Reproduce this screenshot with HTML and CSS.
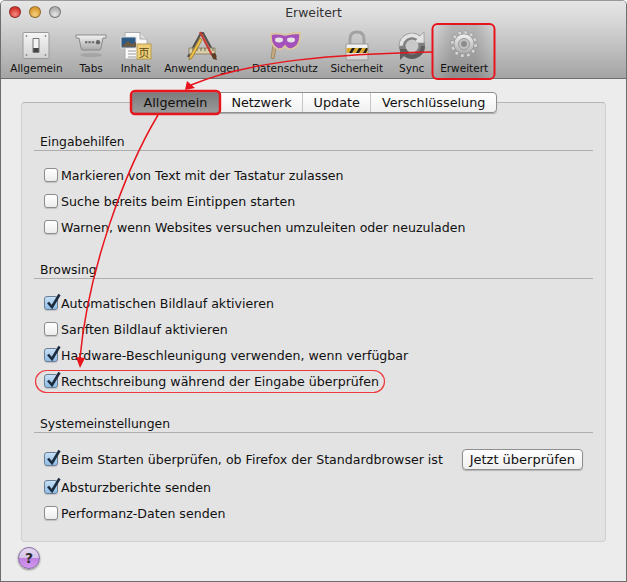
FILE: index.html
```html
<!DOCTYPE html>
<html lang="de">
<head>
  <meta charset="UTF-8">
  <title>Erweitert</title>
  <link rel="stylesheet" href="styles.css">
</head>
<body>
  <svg class="defs" width="0" height="0">
    <defs>
      <symbol id="tick" viewBox="0 0 18 18">
        <path d="M4 9.5 L8 14 L15.5 1.5" fill="none" stroke="#1c2b3d" stroke-width="2.6"/>
      </symbol>
      <linearGradient id="metal" x1="0" y1="0" x2="0" y2="1">
        <stop offset="0" stop-color="#f4f4f4"/>
        <stop offset="1" stop-color="#a9a9a9"/>
      </linearGradient>
      <linearGradient id="plate" x1="0" y1="0" x2="0" y2="1">
        <stop offset="0" stop-color="#f6f6f6"/>
        <stop offset="1" stop-color="#d2d2d2"/>
      </linearGradient>
    </defs>
  </svg>

  <div class="window">
    <div class="titlebar">
      <div class="lights">
        <span class="light red"></span>
        <span class="light yellow"></span>
        <span class="light grey"></span>
      </div>
      <span class="title">Erweitert</span>
    </div>

    <div class="toolbar">
      <div class="tool">
        <svg class="icon" viewBox="0 0 32 32">
          <rect x="3" y="2.5" width="26" height="26" rx="1" fill="url(#plate)" stroke="#999"/>
          <circle cx="6.5" cy="6" r=".9" fill="#888"/><circle cx="25.5" cy="6" r=".9" fill="#888"/>
          <circle cx="6.5" cy="25" r=".9" fill="#888"/><circle cx="25.5" cy="25" r=".9" fill="#888"/>
          <rect x="12.5" y="8" width="7" height="15" rx="1" fill="#777"/>
          <rect x="13.5" y="9" width="5" height="9" fill="#f4f4f4"/>
          <rect x="13.5" y="18" width="5" height="4" fill="#444"/>
        </svg>
        <span>Allgemein</span>
      </div>
      <div class="tool">
        <svg class="icon" viewBox="0 0 32 32">
          <path d="M1 5 H31 V8 H28 L26 18 Q26 20 24 20 H8 Q6 20 6 18 L4 8 H1 Z" fill="url(#metal)" stroke="#8a8a8a"/>
          <rect x="10" y="11" width="2.4" height="2.4" fill="#777"/><rect x="13.4" y="11" width="2.4" height="2.4" fill="#777"/>
          <rect x="16.8" y="11" width="2.4" height="2.4" fill="#777"/>
          <circle cx="23" cy="12.2" r="2.2" fill="#666"/>
          <ellipse cx="16" cy="25" rx="11" ry="2" fill="#8f8f8f" opacity=".45"/>
        </svg>
        <span>Tabs</span>
      </div>
      <div class="tool">
        <svg class="icon" viewBox="0 0 32 32">
          <path d="M5 2.5 H20 L27 9 V29 H5 Z" fill="#fafafa" stroke="#aaa"/>
          <path d="M20 2.5 V9 H27" fill="#ddd" stroke="#aaa"/>
          <rect x="1" y="7" width="15" height="11" fill="#2e5a86" stroke="#ddd"/>
          <path d="M2 16 L8 11 L12 14 L16 12 V17 H2 Z" fill="#6b5a45"/>
          <path d="M8 21 H16 M8 24 H16 M8 27 H16" stroke="#999"/>
          <rect x="17" y="14" width="14" height="15" fill="#eccf78" stroke="#b99c4a"/>
          <text class="glyph" x="24" y="26.5" text-anchor="middle">页</text>
        </svg>
        <span>Inhalt</span>
      </div>
      <div class="tool">
        <svg class="icon" viewBox="0 0 32 32">
          <path d="M2 27 L15 3 H17 L30 27" fill="none" stroke="#55504a" stroke-width="2.2"/>
          <path d="M3 18 H29 V24 H3 Z" fill="#d9cfa8" stroke="#8c8468"/>
          <path d="M7 18 V21 M11 18 V21 M15 18 V21 M19 18 V21 M23 18 V21 M27 18 V21" stroke="#6b6450"/>
          <path d="M14 8 L4 26 L3 30 L6 28 L16 10 Z" fill="#eec14a" stroke="#8a6c20" stroke-width=".7"/>
          <path d="M14 2 L26 25" stroke="#c83a34" stroke-width="2.2"/>
          <path d="M25 24 L29 23 L31 30 L27 29 Z" fill="#5d3c22"/>
        </svg>
        <span>Anwendungen</span>
      </div>
      <div class="tool">
        <svg class="icon" viewBox="0 0 32 32">
          <path d="M4 14 L2 28 L5 29 L7 18 Z" fill="#c7ab80" stroke="#85704e" stroke-width=".6"/>
          <path d="M2 4 Q9 3 16 5 Q23 3 31 3 Q32 16 23 19 Q19 20 16 16 Q13 20 9 19 Q1 16 2 4 Z" fill="#a551bb" stroke="#d9c79f" stroke-width="1.8"/>
          <ellipse cx="10" cy="10" rx="4" ry="2.4" fill="#e6e3e6"/>
          <ellipse cx="22" cy="10" rx="4" ry="2.4" fill="#e6e3e6"/>
        </svg>
        <span>Datenschutz</span>
      </div>
      <div class="tool">
        <svg class="icon" viewBox="0 0 32 32">
          <path d="M9 15 V9 Q9 2 16 2 Q23 2 23 9 V15" fill="none" stroke="#a2a2a2" stroke-width="3"/>
          <rect x="5" y="14" width="22" height="16" rx="1" fill="url(#plate)" stroke="#989898"/>
          <rect x="5.5" y="18" width="21" height="5" fill="#d9a92c"/>
          <path d="M8 23 L11 18 H14 L11 23 Z M15 23 L18 18 H21 L18 23 Z M22 23 L25 18 H26.5 V20 L24.8 23 Z" fill="#241f14"/>
        </svg>
        <span>Sicherheit</span>
      </div>
      <div class="tool">
        <svg class="icon" viewBox="0 0 32 32">
          <circle cx="16" cy="16" r="13" fill="#7f7f7f"/>
          <path d="M3 16 A13 13 0 0 1 24 6 L28 2 V13 H17 L21 9 A9 9 0 0 0 7 16 Z" fill="#e4e4e4" stroke="#8a8a8a" stroke-width=".6"/>
          <path d="M29 16 A13 13 0 0 1 8 26 L4 30 V19 H15 L11 23 A9 9 0 0 0 25 16 Z" fill="#5d5d5d"/>
          <circle cx="16" cy="16" r="6.5" fill="#c9c9c9"/>
        </svg>
        <span>Sync</span>
      </div>
      <div class="tool current">
        <svg class="icon" viewBox="0 0 32 32">
          <circle cx="16" cy="14" r="11.6" fill="none" stroke="#8d8d8d" stroke-width="4" pathLength="24" stroke-dasharray="1.1 .9"/>
          <circle cx="16" cy="14" r="11.6" fill="none" stroke="#d6d6d6" stroke-width="3" pathLength="24" stroke-dasharray=".9 1.1" stroke-dashoffset="-.1"/>
          <circle cx="16" cy="14" r="10" fill="url(#metal)" stroke="#8f8f8f" stroke-width=".6"/>
          <circle cx="16" cy="14" r="5.5" fill="#c4c4c4" stroke="#9a9a9a"/>
          <circle cx="16" cy="14" r="3" fill="#8c8c8c"/>
        </svg>
        <span>Erweitert</span>
      </div>
    </div>

    <div class="content">
      <div class="tabs">
        <span class="tab selected">Allgemein</span>
        <span class="tab">Netzwerk</span>
        <span class="tab">Update</span>
        <span class="tab">Verschlüsselung</span>
      </div>

      <div class="panel">
        <div class="group">
          <h2>Eingabehilfen</h2>
          <div class="row"><span class="check"></span>Markieren von Text mit der Tastatur zulassen</div>
          <div class="row"><span class="check"></span>Suche bereits beim Eintippen starten</div>
          <div class="row"><span class="check"></span>Warnen, wenn Websites versuchen umzuleiten oder neuzuladen</div>
        </div>

        <div class="group">
          <h2>Browsing</h2>
          <div class="row"><span class="check on"><svg><use href="#tick"/></svg></span>Automatischen Bildlauf aktivieren</div>
          <div class="row"><span class="check"></span>Sanften Bildlauf aktivieren</div>
          <div class="row"><span class="check on"><svg><use href="#tick"/></svg></span>Hardware-Beschleunigung verwenden, wenn verfügbar</div>
          <div class="row"><span class="check on"><svg><use href="#tick"/></svg></span>Rechtschreibung während der Eingabe überprüfen</div>
        </div>

        <div class="group">
          <h2>Systemeinstellungen</h2>
          <div class="row tall">
            <span class="check on"><svg><use href="#tick"/></svg></span>Beim Starten überprüfen, ob Firefox der Standardbrowser ist
            <button class="btn">Jetzt überprüfen</button>
          </div>
          <div class="row"><span class="check on"><svg><use href="#tick"/></svg></span>Absturzberichte senden</div>
          <div class="row"><span class="check"></span>Performanz-Daten senden</div>
        </div>
      </div>

      <div class="help">?</div>
    </div>

    <!-- red markup drawn on top of the screenshot -->
    <svg class="marks" width="627" height="582" viewBox="0 0 627 582">
      <g fill="none">
        <rect x="432.5" y="24" width="62" height="55" rx="5" stroke="#e8141c" stroke-width="2"/>
        <rect x="131" y="91" width="89" height="23" rx="4" stroke="#e8141c" stroke-width="2.4"/>
        <rect x="35.5" y="370.5" width="349" height="22" rx="11" stroke="#ee3a3f" stroke-width="1.2"/>
        <path d="M432 52 C 340 54 250 60 191 85" stroke="#e8141c" stroke-width="1.5"/>
        <path d="M158 115 C 125 170 88 270 80 358" stroke="#e8141c" stroke-width="1.5"/>
      </g>
      <path d="M185 90 L187 81 L195 88 Z" fill="#e8141c"/>
      <path d="M80 368 L76 357 L85 358 Z" fill="#e8141c"/>
    </svg>
  </div>
</body>
</html>
```

FILE: styles.css
```css
html, body {
  margin: 0;
  padding: 0;
  background: #fff;
}
body {
  font-family: "DejaVu Sans", sans-serif;
  font-size: 12.6px;
  color: #111;
}
.defs {
  position: absolute;
}
.window {
  position: relative;
  width: 627px;
  height: 582px;
  box-sizing: border-box;
  border: 1px solid #6e6e6e;
  border-top-color: #999;
  border-radius: 5px 5px 0 0;
  background: #ececec;
  overflow: hidden;
  display: flex;
  flex-direction: column;
}
.titlebar {
  height: 22px;
  display: flex;
  align-items: center;
  justify-content: center;
  position: relative;
  background: linear-gradient(#e6e6e6, #d6d6d6);
}
.title {
  font-size: 12.4px;
  color: #333;
}
.lights {
  position: absolute;
  left: 8px;
  top: 5px;
  display: flex;
  gap: 8px;
}
.light {
  width: 12px;
  height: 12px;
  border-radius: 50%;
  border: 1px solid rgba(0,0,0,.35);
  box-sizing: border-box;
}
.light.red { background: radial-gradient(circle at 50% 75%, #f58a80, #d5342e 70%); }
.light.yellow { background: radial-gradient(circle at 50% 75%, #f6d080, #d99a30 70%); }
.light.grey { background: radial-gradient(circle at 50% 75%, #e6e6e6, #aeaeae 70%); }

.toolbar {
  height: 55px;
  display: flex;
  padding-left: 3px;
  background: linear-gradient(#d6d6d6, #a4a4a4);
  border-bottom: 1px solid #6f6f6f;
}
.tool {
  display: flex;
  flex-direction: column;
  align-items: center;
  padding: 0 6.25px;
  font-size: 10.5px;
  line-height: 14px;
  color: #111;
  white-space: nowrap;
}
.tool.current {
  background: linear-gradient(90deg, rgba(0,0,0,0), rgba(0,0,0,.14) 30%, rgba(0,0,0,.14) 70%, rgba(0,0,0,0));
}
.icon {
  width: 32px;
  height: 32px;
  margin: 7px 0 -1px;
  flex: none;
}
.glyph {
  font-family: "Noto Sans CJK SC", sans-serif;
  font-size: 11px;
  fill: #5c4514;
}

.content {
  flex: 1;
  display: flex;
  flex-direction: column;
  align-items: flex-start;
  padding: 13px 20px 0;
}
.tabs {
  align-self: center;
  display: flex;
  height: 19px;
  margin: 0 0 -11px;
  position: relative;
  z-index: 1;
  background: linear-gradient(#fff, #f0f0f0);
  border: 1px solid #8f8f8f;
  border-radius: 4px;
  box-shadow: 0 1px 1px rgba(0,0,0,.25);
  font-size: 12.8px;
}
.tab {
  padding: 0 10.5px;
  line-height: 19px;
  border-left: 1px solid #c6c6c6;
}
.tab:first-child {
  border-left: none;
  padding: 0 12.5px;
}
.tab.selected {
  background: linear-gradient(#7c7c7c, #999);
  border-radius: 3px 0 0 3px;
}
.panel {
  width: 585px;
  height: 440px;
  box-sizing: border-box;
  background: #e3e3e3;
  border: 1px solid #cfcfcf;
  border-top-color: #b4b4b4;
  border-radius: 4px;
  padding: 29px 12px 0;
}
.group {
  margin-bottom: 20px;
}
h2 {
  margin: 0 0 11px;
  font-size: 12.4px;
  font-weight: normal;
  line-height: 16px;
  padding: 2px 0 0 6px;
  border-bottom: 1px solid #aeaeae;
}
.row {
  display: flex;
  align-items: center;
  height: 26px;
  padding-left: 10px;
  white-space: nowrap;
}
.row.tall {
  height: 30px;
}
.check {
  width: 14px;
  height: 14px;
  box-sizing: border-box;
  margin-right: 3px;
  border: 1px solid #8c8c8c;
  border-radius: 3px;
  background: linear-gradient(#fff, #ececec);
  box-shadow: 0 1px 1px rgba(0,0,0,.15);
  position: relative;
  flex: none;
}
.check.on {
  background: linear-gradient(#c6dff5, #8fbde6);
  border-color: #6b7f96;
}
.check svg {
  position: absolute;
  left: -1px;
  top: -4px;
  width: 18px;
  height: 18px;
}
.btn {
  margin-left: 19px;
  width: 121px;
  height: 21px;
  padding: 0;
  font: 13px "DejaVu Sans", sans-serif;
  color: #111;
  background: linear-gradient(#fff, #eee);
  border: 1px solid #8f8f8f;
  border-radius: 4px;
  box-shadow: 0 1px 1px rgba(0,0,0,.2);
}
.help {
  width: 22px;
  height: 22px;
  margin: 5px 0 0 -3px;
  border-radius: 50%;
  border: 1px solid #8a6ba8;
  box-sizing: border-box;
  text-align: center;
  font-size: 14px;
  font-weight: bold;
  line-height: 20px;
  color: #2a2a2a;
  background: linear-gradient(#e4d8f0 0, #d4c4e8 48%, #c080e2 52%, #d49af0 100%);
  box-shadow: 0 1px 2px rgba(0,0,0,.45);
}
.marks {
  position: absolute;
  left: -1px;
  top: -1px;
  z-index: 2;
  pointer-events: none;
}
```
